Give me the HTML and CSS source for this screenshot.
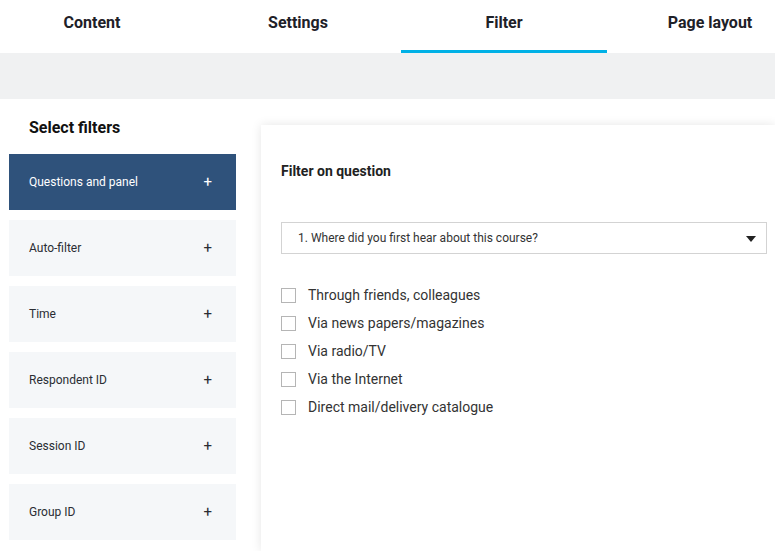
FILE: index.html
```html
<!DOCTYPE html>
<html>
<head>
<meta charset="utf-8">
<link rel="stylesheet" href="styles.css">
</head>
<body>
<div class="tabs">
  <div class="tab">Content</div>
  <div class="tab">Settings</div>
  <div class="tab active">Filter</div>
  <div class="tab">Page layout</div>
</div>
<div class="band"></div>
<div class="main">
  <aside class="side">
    <h2 class="side-title">Select filters</h2>
    <ul class="filters">
      <li class="filter active"><span>Questions and panel</span><span class="plus">+</span></li>
      <li class="filter"><span>Auto-filter</span><span class="plus">+</span></li>
      <li class="filter"><span>Time</span><span class="plus">+</span></li>
      <li class="filter"><span>Respondent ID</span><span class="plus">+</span></li>
      <li class="filter"><span>Session ID</span><span class="plus">+</span></li>
      <li class="filter"><span>Group ID</span><span class="plus">+</span></li>
    </ul>
  </aside>
  <section class="card">
    <h3 class="card-title">Filter on question</h3>
    <div class="select">
      <span>1. Where did you first hear about this course?</span>
      <svg class="caret" width="10" height="6" viewBox="0 0 10 6"><path d="M0 0H10L5 6Z" fill="#222"/></svg>
    </div>
    <ul class="options">
      <li class="option"><span class="box"></span>Through friends, colleagues</li>
      <li class="option"><span class="box"></span>Via news papers/magazines</li>
      <li class="option"><span class="box"></span>Via radio/TV</li>
      <li class="option"><span class="box"></span>Via the Internet</li>
      <li class="option"><span class="box"></span>Direct mail/delivery catalogue</li>
    </ul>
  </section>
</div>
</body>
</html>
```
FILE: styles.css
```css
* { box-sizing: border-box; }
html, body { margin: 0; padding: 0; }
body {
  font-family: Roboto, "Liberation Sans", sans-serif;
  color: #222;
  background: #fff;
  width: 775px;
  height: 551px;
  overflow: hidden;
}
.tabs {
  display: flex;
  height: 53px;
  margin-left: -11px;
  background: #fff;
}
.tab {
  flex: 0 0 206px;
  text-align: center;
  font-size: 16px;
  font-weight: bold;
  color: #1e2128;
  padding-top: 13px;
  border-bottom: 3px solid transparent;
}
.tab.active { border-bottom-color: #00b1e6; }
.band {
  height: 46px;
  background: #f0f1f2;
}
.main {
  display: flex;
  align-items: flex-start;
  height: 452px;
}
.side {
  width: 236px;
  padding-left: 9px;
  flex: 0 0 auto;
}
.side-title {
  margin: 0;
  padding: 19px 0 0 20px;
  height: 55px;
  font-size: 16px;
  font-weight: bold;
  color: #111;
}
.filters {
  list-style: none;
  margin: 0;
  padding: 0;
  display: flex;
  flex-direction: column;
  gap: 10px;
}
.filter {
  height: 56px;
  background: #f5f7f9;
  display: flex;
  align-items: center;
  justify-content: space-between;
  padding: 0 24px 0 20px;
  font-size: 12px;
  color: #2a2d33;
}
.filter.active {
  background: #2f527b;
  color: #fff;
}
.plus { font-size: 15px; }
.card {
  margin: 26px 0 0 25px;
  flex: 1 1 auto;
  height: 426px;
  background: #fff;
  box-shadow: 0 0 10px rgba(0,0,0,0.1);
  padding: 38px 8px 0 20px;
}
.card-title {
  margin: 0;
  font-size: 14px;
  font-weight: bold;
  color: #222;
  height: 59px;
}
.select {
  height: 32px;
  border: 1px solid #d3d3d3;
  display: flex;
  align-items: center;
  justify-content: space-between;
  padding: 0 10px 0 16px;
  font-size: 12px;
  color: #333;
}
.caret { margin-top: 1px; }
.options {
  list-style: none;
  margin: 0;
  padding: 27px 0 0 0;
}
.option {
  height: 28px;
  display: flex;
  align-items: center;
  font-size: 14px;
  color: #333;
}
.box {
  width: 15px;
  height: 15px;
  border: 1px solid #b5b5b5;
  margin-right: 12px;
  flex: 0 0 auto;
}
```
